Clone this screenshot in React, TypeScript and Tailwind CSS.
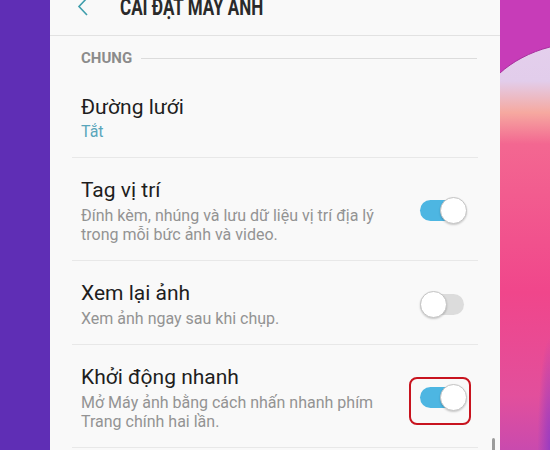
import type { ReactNode } from "react";

interface SettingItem {
  title: string;
  desc?: ReactNode;
  value?: string;
  toggle?: "on" | "off";
  highlight?: boolean;
}

const items: SettingItem[] = [
  { title: "Đường lưới", value: "Tắt" },
  {
    title: "Tag vị trí",
    desc: (
      <>
        Đính kèm, nhúng và lưu dữ liệu vị trí địa lý
        <br />
        trong mỗi bức ảnh và video.
      </>
    ),
    toggle: "on",
  },
  { title: "Xem lại ảnh", desc: "Xem ảnh ngay sau khi chụp.", toggle: "off" },
  {
    title: "Khởi động nhanh",
    desc: (
      <>
        Mở Máy ảnh bằng cách nhấn nhanh phím
        <br />
        Trang chính hai lần.
      </>
    ),
    toggle: "on",
    highlight: true,
  },
];

function Toggle({ on, highlight }: { on: boolean; highlight?: boolean }) {
  return (
    <div className="relative w-[47px] h-[27px] shrink-0">
      <span
        className={`absolute left-0 top-[3px] w-[44px] h-[21px] rounded-full ${
          on ? "bg-[#4db6e2]" : "bg-[#dcdcdc]"
        }`}
      />
      <span
        className={`absolute top-0 w-[27px] h-[27px] rounded-full bg-white border border-[#c4c4c4] shadow-[0_1px_2px_rgba(0,0,0,0.2)] ${
          on ? "right-0" : "left-0"
        }`}
      />
      {highlight && (
        <span className="absolute -left-[11px] -top-[7px] w-[62px] h-[48px] rounded-[8px] border-2 border-[#c8141f]" />
      )}
    </div>
  );
}

function Wallpaper() {
  return (
    <svg width="50" height="450" viewBox="0 0 50 450" className="block">
      <defs>
        <linearGradient id="wp" x1="0" y1="0" x2="0" y2="1">
          <stop offset="0" stopColor="#e6d2ee" />
          <stop offset="0.18" stopColor="#e2cdeb" />
          <stop offset="0.25" stopColor="#f6a9a0" />
          <stop offset="0.32" stopColor="#f36791" />
          <stop offset="0.65" stopColor="#f0468b" />
          <stop offset="0.88" stopColor="#e24f9c" />
          <stop offset="1" stopColor="#c94aae" />
        </linearGradient>
        <radialGradient id="corner" cx="1" cy="1" r="0.25">
          <stop offset="0" stopColor="#9a3cc0" />
          <stop offset="1" stopColor="#9a3cc0" stopOpacity="0" />
        </radialGradient>
      </defs>
      <rect width="50" height="450" fill="url(#wp)" />
      <rect width="50" height="450" fill="url(#corner)" />
      <path d="M0 0 H50 V47 C30 52 12 62 0 73 Z" fill="#c73cb8" />
      <path d="M50 47 C30 52 12 62 0 73" fill="none" stroke="#a8309e" strokeWidth="1" />
    </svg>
  );
}

export default function App() {
  return (
    <div
      className="flex w-[550px] h-[450px] overflow-hidden"
      style={{ fontFamily: "Roboto, 'Noto Sans', sans-serif" }}
    >
      <div className="w-[50px] shrink-0 bg-[#5f2eb5]" />

      <div className="relative w-[450px] shrink-0 bg-[#f9f9f9]">
        {/* header */}
        <div className="h-[36px] border-b border-[#e2e2e2] flex items-end overflow-hidden">
          <svg width="14" height="20" viewBox="0 0 14 20" className="ml-[27px] mb-[18px] shrink-0">
            <path d="M10 1 L2 9.5 L10 18" fill="none" stroke="#3f9eac" strokeWidth="1.6" />
          </svg>
          <div className="ml-[29px] mb-[14px] text-[23px] leading-[26px] font-bold text-[#2a2a2a] whitespace-nowrap origin-left scale-x-[0.74]">
            CÀI ĐẶT MÁY ẢNH
          </div>
        </div>

        {/* section */}
        <div className="pt-[13px] pb-[8px] pl-[31px] pr-[23px] flex items-center gap-[9px]">
          <span className="text-[15px] leading-[18px] font-bold text-[#8b8b8b]">CHUNG</span>
          <span className="flex-1 h-px bg-[#dcdcdc]" />
        </div>

        <div className="mx-[22px]">
          {items.map((item) => (
            <div
              key={item.title}
              className="flex items-center border-b border-[#e8e8e8] pl-[9px] pr-[11px] pt-[19px] pb-[16px]"
            >
              <div className="flex-1 min-w-0">
                <div className="text-[21px] leading-[26px] text-[#1e1e1e]">{item.title}</div>
                {item.value && (
                  <div className="mt-[2px] text-[16px] leading-[19px] text-[#5aa6bb]">{item.value}</div>
                )}
                {item.desc && (
                  <div className="mt-[3px] text-[16px] leading-[19px] text-[#939393]">{item.desc}</div>
                )}
              </div>
              {item.toggle && <Toggle on={item.toggle === "on"} highlight={item.highlight} />}
            </div>
          ))}
        </div>

        {/* scrollbar */}
        <span className="absolute left-[442px] top-[438px] w-[3px] h-[20px] rounded-sm bg-[#9b9b9b]" />
      </div>

      <div className="flex-1">
        <Wallpaper />
      </div>
    </div>
  );
}
